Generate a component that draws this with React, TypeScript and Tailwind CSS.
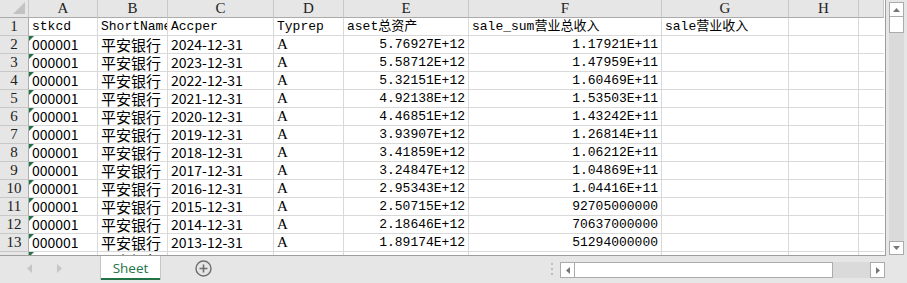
import React from 'react';

const cols = ['A', 'B', 'C', 'D', 'E', 'F', 'G', 'H', ''];

const assets = [
  '5.76927E+12', '5.58712E+12', '5.32151E+12', '4.92138E+12', '4.46851E+12', '3.93907E+12',
  '3.41859E+12', '3.24847E+12', '2.95343E+12', '2.50715E+12', '2.18646E+12', '1.89174E+12', '1.60658E+12',
];

const sales = [
  '1.17921E+11', '1.47959E+11', '1.60469E+11', '1.53503E+11', '1.43242E+11', '1.26814E+11',
  '1.06212E+11', '1.04869E+11', '1.04416E+11', '92705000000', '70637000000', '51294000000', '41469000000',
];

const rows = assets.map((a, i) => ({
  date: `${2024 - i}-12-31`,
  aset: a,
  sale: sales[i],
}));

const mono = "font-['Liberation_Mono','Noto_Sans_CJK_SC',monospace] text-[13px]";
const serif = "font-['Liberation_Serif','Noto_Sans_CJK_SC',serif] text-[15px]";
const cjk = "font-['Noto_Sans_CJK_SC','Noto_Sans',sans-serif]";

const Cell: React.FC<{ children?: React.ReactNode; className?: string; flag?: boolean }> = ({
  children,
  className = '',
  flag = false,
}) => (
  <div
    className={`relative flex items-end overflow-hidden whitespace-nowrap border-r border-b border-[#d9d9d9] bg-white px-[3px] leading-[17px] text-black ${className}`}
  >
    {flag && (
      <span className="absolute left-0 top-0 h-0 w-0 border-t-[5px] border-r-[5px] border-t-[#217346] border-r-transparent" />
    )}
    {children}
  </div>
);

const RowHead: React.FC<{ n: number }> = ({ n }) => (
  <div className={`flex items-end justify-center border-r border-b border-r-[#ababab] border-b-[#c8c8c8] bg-[#e6e6e6] leading-[17px] text-[#222] ${serif}`}>
    {n}
  </div>
);

export default function App() {
  return (
    <div className="h-[283px] w-[907px] overflow-hidden bg-[#e6e6e6]">
      <div className="flex h-[256px]">
        <div className="h-[256px] w-[886px] overflow-hidden border-r border-b border-[#9e9e9e] bg-white">
          <div className="grid grid-cols-[29px_69px_70px_106px_70px_125px_193px_127px_70px_25px] auto-rows-[18px]">
            <div className="relative border-r border-b border-r-[#c8c8c8] border-b-[#ababab] bg-[#e6e6e6]">
              <svg className="absolute right-[3px] bottom-[3px]" width="12" height="12" viewBox="0 0 12 12">
                <polygon points="12,0 12,12 0,12" fill="#c2c2c2" />
              </svg>
            </div>
            {cols.map((c, i) => (
              <div
                key={i}
                className={`flex items-end justify-center border-r border-b border-r-[#c8c8c8] border-b-[#ababab] bg-[#e6e6e6] leading-[17px] text-[#222] ${serif}`}
              >
                {c}
              </div>
            ))}

            <RowHead n={1} />
            <Cell className={mono}>stkcd</Cell>
            <Cell className={mono}>ShortName</Cell>
            <Cell className={mono}>Accper</Cell>
            <Cell className={mono}>Typrep</Cell>
            <Cell className={mono}>aset总资产</Cell>
            <Cell className={mono}>sale_sum营业总收入</Cell>
            <Cell className={mono}>sale营业收入</Cell>
            <Cell />
            <Cell className="border-r-0" />

            {rows.map((r, i) => (
              <React.Fragment key={r.date}>
                <RowHead n={i + 2} />
                <Cell flag className={`${cjk} text-[14px]`}>000001</Cell>
                <Cell className={`${cjk} text-[15px]`}>平安银行</Cell>
                <Cell className={`${cjk} text-[14px]`}>{r.date}</Cell>
                <Cell className={`${serif} text-[14px]`}>A</Cell>
                <Cell className={`${mono} justify-end`}>{r.aset}</Cell>
                <Cell className={`${mono} justify-end`}>{r.sale}</Cell>
                <Cell />
                <Cell />
                <Cell className="border-r-0" />
              </React.Fragment>
            ))}
          </div>
        </div>

        {/* vertical scrollbar */}
        <div className="flex h-[256px] w-[21px] flex-col bg-[#e6e6e6] pt-[2px] pl-[3px]">
          <div className="flex h-[15px] w-[15px] items-center justify-center border border-[#ababab] bg-white">
            <svg width="7" height="4" viewBox="0 0 7 4">
              <polygon points="0,4 7,4 3.5,0" fill="#777" />
            </svg>
          </div>
          <div className="h-[16px] w-[15px] border border-t-0 border-[#ababab] bg-white" />
          <div className="w-[15px] flex-1 bg-[#dadada]" />
          <div className="mb-[1px] flex h-[14px] w-[15px] items-center justify-center border border-[#ababab] bg-white">
            <svg width="7" height="4" viewBox="0 0 7 4">
              <polygon points="0,0 7,0 3.5,4" fill="#777" />
            </svg>
          </div>
        </div>
      </div>

      {/* sheet tabs bar */}
      <div className="flex h-[27px] items-start">
        <div className="flex h-[24px] w-[100px] items-center gap-[25px] pl-[27px]">
          <svg width="5" height="9" viewBox="0 0 5 9">
            <polygon points="5,0 5,9 0,4.5" fill="#c6c6c6" />
          </svg>
          <svg width="5" height="9" viewBox="0 0 5 9">
            <polygon points="0,0 0,9 5,4.5" fill="#c6c6c6" />
          </svg>
        </div>
        <div className="flex h-[24px] w-[61px] flex-col border-x border-[#c6c6c6] bg-white">
          <div className="flex flex-1 items-center justify-center pt-[3px] font-['Open_Sans','Noto_Sans',sans-serif] text-[13.5px] leading-none text-[#217346]">
            Sheet
          </div>
          <div className="h-[2px] bg-[#217346]" />
        </div>
        <div className="flex h-[24px] w-[90px] items-center pl-[34px]">
          <svg width="17" height="17" viewBox="0 0 17 17">
            <circle cx="8.5" cy="8.5" r="7.5" fill="none" stroke="#6e6e6e" strokeWidth="1.4" />
            <path d="M8.5 4.5v8M4.5 8.5h8" stroke="#6e6e6e" strokeWidth="1.6" />
          </svg>
        </div>
        <div className="flex-1" />
        <div className="mt-[7px] flex h-[12px] w-[16px] flex-col items-center justify-between">
          <span className="h-[2px] w-[2px] bg-[#bdbdbd]" />
          <span className="h-[2px] w-[2px] bg-[#bdbdbd]" />
          <span className="h-[2px] w-[2px] bg-[#bdbdbd]" />
        </div>
        <div className="mr-[22px] mt-[6px] flex h-[16px] w-[325px]">
          <div className="flex w-[15px] items-center justify-center border border-[#ababab] bg-white">
            <svg width="4" height="7" viewBox="0 0 4 7">
              <polygon points="4,0 4,7 0,3.5" fill="#777" />
            </svg>
          </div>
          <div className="w-[258px] border border-l-0 border-[#ababab] bg-white" />
          <div className="flex-1 bg-[#dadada]" />
          <div className="flex w-[15px] items-center justify-center border border-[#ababab] bg-white">
            <svg width="4" height="7" viewBox="0 0 4 7">
              <polygon points="0,0 0,7 4,3.5" fill="#777" />
            </svg>
          </div>
        </div>
      </div>
    </div>
  );
}
